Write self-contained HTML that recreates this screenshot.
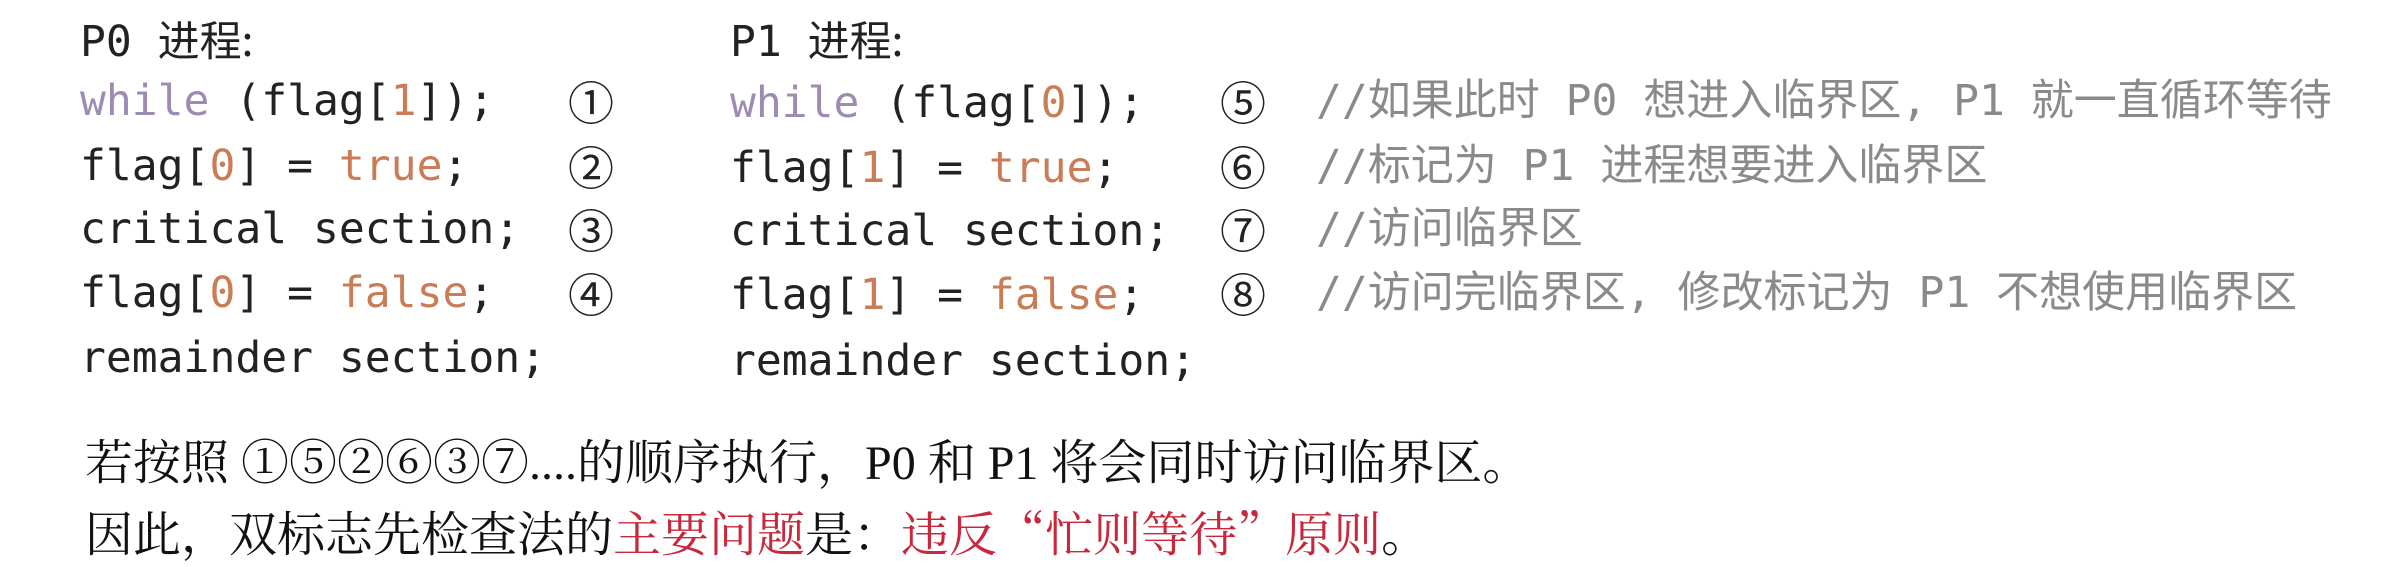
<!DOCTYPE html>
<html><head><meta charset="utf-8"><style>
html,body{margin:0;padding:0;background:#fff;width:2385px;height:567px;overflow:hidden;position:relative}
.c{position:absolute;font-family:"DejaVu Sans Mono","Liberation Mono","Noto Sans CJK SC",monospace;font-size:43px;color:#222;white-space:pre;line-height:1}
.k{color:#9d8bb3}.n{color:#c97c55}
.cm{position:absolute;font-family:"DejaVu Sans Mono","Noto Sans CJK SC",monospace;font-size:43px;color:#8a8a8a;white-space:pre;line-height:1}
.ci{position:absolute;font-family:"Noto Sans CJK SC",sans-serif;font-size:46px;color:#222;line-height:1}
.b{position:absolute;font-family:"Liberation Serif","Noto Serif CJK SC",serif;font-size:48px;color:#111;white-space:pre;line-height:1}
.r{color:#c8283c}
.q{font-family:"Noto Serif CJK SC",serif}
</style></head><body>
<div class="c" style="left:80px;top:18px">P0 <span style="font-family:'Noto Sans CJK SC',sans-serif;font-size:42px">进程:</span></div>
<div class="c" style="left:730px;top:18px">P1 <span style="font-family:'Noto Sans CJK SC',sans-serif;font-size:42px">进程:</span></div>

<div class="c" style="left:80px;top:80px"><span class="k">while</span> (flag[<span class="n">1</span>]);</div>
<div class="c" style="left:80px;top:145px">flag[<span class="n">0</span>] = <span class="n">true</span>;</div>
<div class="c" style="left:80px;top:208px">critical section;</div>
<div class="c" style="left:80px;top:272px">flag[<span class="n">0</span>] = <span class="n">false</span>;</div>
<div class="c" style="left:80px;top:337px">remainder section;</div>

<div class="ci" style="left:568px;top:78px">①</div>
<div class="ci" style="left:568px;top:143px">②</div>
<div class="ci" style="left:568px;top:206px">③</div>
<div class="ci" style="left:568px;top:270px">④</div>

<div class="c" style="left:730px;top:82px"><span class="k">while</span> (flag[<span class="n">0</span>]);</div>
<div class="c" style="left:730px;top:147px">flag[<span class="n">1</span>] = <span class="n">true</span>;</div>
<div class="c" style="left:730px;top:210px">critical section;</div>
<div class="c" style="left:730px;top:274px">flag[<span class="n">1</span>] = <span class="n">false</span>;</div>
<div class="c" style="left:730px;top:340px">remainder section;</div>

<div class="ci" style="left:1220px;top:78px">⑤</div>
<div class="ci" style="left:1220px;top:143px">⑥</div>
<div class="ci" style="left:1220px;top:206px">⑦</div>
<div class="ci" style="left:1220px;top:270px">⑧</div>

<div class="cm" style="left:1316px;top:80px">//如果此时 P0 想进入临界区, P1 就一直循环等待</div>
<div class="cm" style="left:1316px;top:145px">//标记为 P1 进程想要进入临界区</div>
<div class="cm" style="left:1316px;top:208px">//访问临界区</div>
<div class="cm" style="left:1316px;top:272px">//访问完临界区, 修改标记为 P1 不想使用临界区</div>

<div class="b" style="left:85px;top:440px">若按照 ①⑤②⑥③⑦....的顺序执行，P0 和 P1 将会同时访问临界区。</div>
<div class="b" style="left:85px;top:507px">因此，双标志先检查法的<span class="r">主要问题</span>是：<span class="r">违反<span class="q">“</span>忙则等待<span class="q">”</span>原则</span>。</div>
</body></html>
